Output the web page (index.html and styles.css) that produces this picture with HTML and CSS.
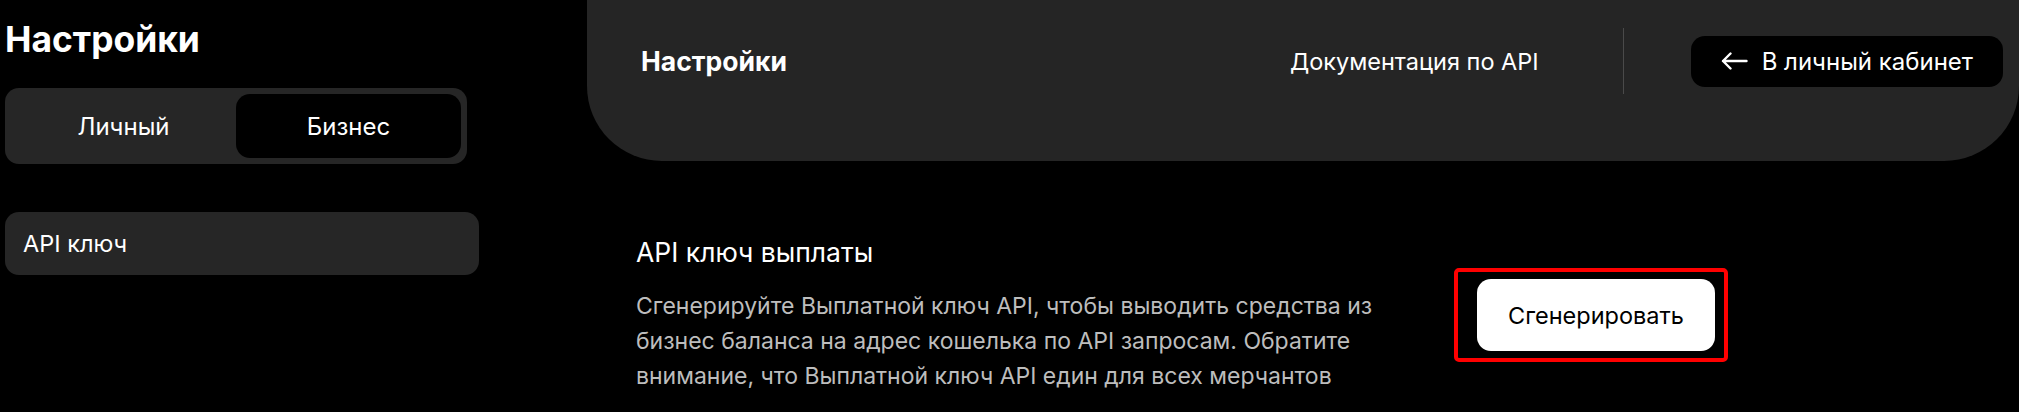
FILE: index.html
```html
<!DOCTYPE html>
<html lang="ru">
<head>
<meta charset="utf-8">
<title>Настройки</title>
<link rel="stylesheet" href="styles.css">
</head>
<body>
<div class="layout">
  <aside class="sidebar">
    <h1 class="sidebar-title">Настройки</h1>
    <div class="toggle">
      <button class="toggle-item">Личный</button>
      <button class="toggle-item active">Бизнес</button>
    </div>
    <nav class="side-nav">
      <a class="side-item">API ключ</a>
    </nav>
  </aside>
  <main class="main">
    <header class="topbar">
      <div class="topbar-row">
        <div class="topbar-title">Настройки</div>
        <div class="topbar-right">
          <a class="doc-link">Документация по API</a>
          <span class="divider"></span>
          <button class="back-btn">
            <svg class="arrow" width="27" height="18" viewBox="0 0 27 18" fill="none" stroke="#fff" stroke-width="2.4" stroke-linecap="round" stroke-linejoin="round"><path d="M25.5 9H2M9.5 1.5L2 9l7.5 7.5"/></svg>
            <span>В личный кабинет</span>
          </button>
        </div>
      </div>
    </header>
    <section class="content">
      <div class="info">
        <h2 class="info-title">API ключ выплаты</h2>
        <p class="info-text">Сгенерируйте Выплатной ключ API, чтобы выводить средства из бизнес баланса на адрес кошелька по API запросам. Обратите внимание, что Выплатной ключ API един для всех мерчантов</p>
      </div>
      <div class="highlight">
        <button class="gen-btn">Сгенерировать</button>
      </div>
    </section>
  </main>
</div>
</body>
</html>
```

FILE: styles.css
```css
* { box-sizing: border-box; }
html, body {
  margin: 0;
  padding: 0;
  background: #000;
  color: #fff;
  font-family: Inter, "Noto Sans", sans-serif;
  overflow: hidden;
}
button { font-family: inherit; border: 0; cursor: pointer; }
a { color: inherit; text-decoration: none; }

.layout {
  display: flex;
  align-items: flex-start;
  height: 412px;
}

.sidebar {
  width: 479px;
  flex: 0 0 479px;
  padding: 22px 0 0 5px;
}
.sidebar-title {
  margin: 0 0 31px;
  font-size: 35.4px;
  line-height: 35px;
  font-weight: 700;
}
.toggle {
  width: 462px;
  height: 76px;
  padding: 6px;
  background: #262626;
  border-radius: 14px;
  display: grid;
  grid-template-columns: 1fr 1fr;
}
.toggle-item {
  background: transparent;
  color: #fff;
  font-size: 24px;
  border-radius: 14px;
}
.toggle-item.active { background: #000; }

.side-nav { margin-top: 48px; }
.side-item {
  display: flex;
  align-items: center;
  height: 63px;
  padding-left: 18px;
  background: #262626;
  border-radius: 14px;
  font-size: 23.5px;
}

.main {
  flex: 1;
  margin-left: 108px;
}
.topbar {
  height: 161px;
  background: #252525;
  border-radius: 0 0 75px 75px;
  padding: 28px 16px 0 54px;
}
.topbar-row {
  height: 66px;
  display: flex;
  align-items: center;
  justify-content: space-between;
}
.topbar-title {
  font-size: 26.5px;
  font-weight: 700;
  line-height: 1;
}
.topbar-right {
  display: flex;
  align-items: center;
  height: 100%;
}
.doc-link {
  font-size: 23.5px;
}
.divider {
  width: 1px;
  height: 66px;
  background: #4a4a4a;
  margin: 0 67px 0 84px;
}
.back-btn {
  display: flex;
  align-items: center;
  gap: 14px;
  height: 51px;
  padding: 0 30px;
  background: #000;
  color: #fff;
  border-radius: 14px;
  font-size: 24px;
}
.arrow { display: block; }

.content {
  display: flex;
  align-items: center;
  padding: 75px 0 0 49px;
}
.info { width: 760px; }
.info-title {
  margin: 0 0 21px;
  font-size: 26.5px;
  font-weight: 400;
  line-height: 32px;
}
.info-text {
  margin: 0;
  font-size: 23px;
  line-height: 35px;
  color: #bdbdbd;
}
.highlight {
  margin-left: 58px;
  border: 4px solid #ff0000;
  border-radius: 5px;
  padding: 7px 9px 7px 19px;
}
.gen-btn {
  display: block;
  width: 238px;
  height: 72px;
  background: #fff;
  color: #000;
  border-radius: 14px;
  font-size: 23.5px;
}
```
